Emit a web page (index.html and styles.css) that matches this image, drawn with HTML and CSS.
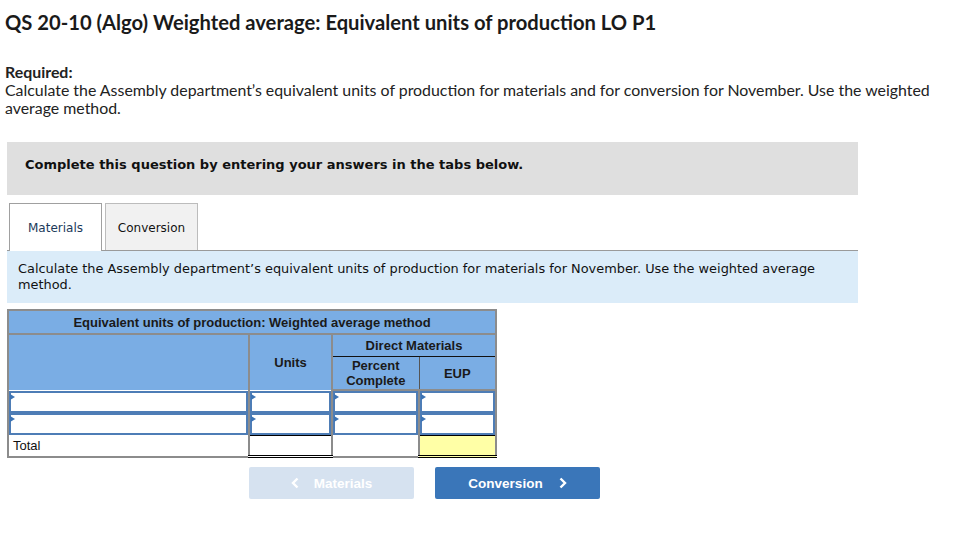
FILE: index.html
```html
<!DOCTYPE html>
<html>
<head>
<meta charset="utf-8">
<link rel="stylesheet" href="styles.css">
</head>
<body>
<div class="page">
  <h1 class="title">QS 20-10 (Algo) Weighted average: Equivalent units of production LO P1</h1>
  <div class="required">
    <div class="req-label">Required:</div>
    <p class="req-text">Calculate the Assembly department’s equivalent units of production for materials and for conversion for November. Use the weighted average method.</p>
  </div>
  <div class="instruct">Complete this question by entering your answers in the tabs below.</div>
  <div class="tabs">
    <div class="tab active">Materials</div>
    <div class="tab">Conversion</div>
  </div>
  <div class="prompt">Calculate the Assembly department’s equivalent units of production for materials for November. Use the weighted average method.</div>
  <table class="eup">
    <colgroup>
      <col class="w1"><col class="w2"><col class="w3"><col class="w4">
    </colgroup>
    <tr class="r-title"><th colspan="4" class="h-title">Equivalent units of production: Weighted average method</th></tr>
    <tr class="r-dm">
      <th rowspan="2" class="c1"></th>
      <th rowspan="2" class="c2 h-units">Units</th>
      <th colspan="2" class="h-dm">Direct Materials</th>
    </tr>
    <tr class="r-pc">
      <th class="c3">Percent<br>Complete</th>
      <th class="c4">EUP</th>
    </tr>
    <tr class="r-in">
      <td class="in"><div class="box"></div></td>
      <td class="in"><div class="box"></div></td>
      <td class="in"><div class="box"></div></td>
      <td class="in"><div class="box"></div></td>
    </tr>
    <tr class="r-in">
      <td class="in"><div class="box"></div></td>
      <td class="in"><div class="box"></div></td>
      <td class="in"><div class="box"></div></td>
      <td class="in"><div class="box"></div></td>
    </tr>
    <tr class="r-total">
      <td class="lbl">Total</td>
      <td class="tot"></td>
      <td class="plain"></td>
      <td class="tot yellow"></td>
    </tr>
  </table>
  <div class="nav">
    <div class="btn disabled">
      <svg class="chev-l" width="8" height="12" viewBox="0 0 8 12"><path d="M6.5 1.5 L2 6 L6.5 10.5" fill="none" stroke="#fff" stroke-width="2.4"/></svg>
      Materials
    </div>
    <div class="btn primary">
      Conversion
      <svg class="chev-r" width="8" height="12" viewBox="0 0 8 12"><path d="M1.5 1.5 L6 6 L1.5 10.5" fill="none" stroke="#fff" stroke-width="2.4"/></svg>
    </div>
  </div>
</div>
</body>
</html>
```
FILE: styles.css
```css
html, body {
  margin: 0;
  padding: 0;
  background: #fff;
}
.page {
  width: 953px;
  height: 537px;
  position: relative;
  color: #222;
}
.title {
  margin: 0;
  padding: 10px 0 0 5px;
  font-family: Lato, "Open Sans", sans-serif;
  font-weight: 700;
  font-size: 20.2px;
  line-height: 25px;
  color: #1a1a1a;
}
.required {
  margin-top: 28px;
  padding-left: 5px;
  padding-right: 18px;
  font-family: Lato, "Open Sans", sans-serif;
  font-size: 15.9px;
  line-height: 18px;
  color: #222;
}
.req-label {
  font-weight: 700;
}
.req-text {
  margin: 0;
}
.instruct {
  margin: 25px 0 0 7px;
  width: 851px;
  height: 53px;
  box-sizing: border-box;
  background: #dfdfdf;
  padding: 14px 0 0 18px;
  font-family: "DejaVu Sans", Verdana, sans-serif;
  font-weight: 700;
  font-size: 13px;
  line-height: 18px;
  color: #111;
}
.tabs {
  display: flex;
  margin: 8px 0 0 7px;
  width: 851px;
  border-bottom: 1px solid #9a9a9a;
  padding-left: 2px;
  box-sizing: border-box;
  gap: 3px;
}
.tab {
  width: 93px;
  height: 47px;
  box-sizing: border-box;
  border: 1px solid #bcbcbc;
  border-bottom: none;
  background: #f1f1f1;
  font-family: "DejaVu Sans", Verdana, sans-serif;
  font-size: 12px;
  display: flex;
  align-items: center;
  justify-content: center;
  padding-top: 1px;
  color: #111;
}
.tab.active {
  background: #fff;
  border-color: #a0a0a0;
  margin-bottom: -1px;
  height: 48px;
  padding-top: 0;
  color: #1c3a5a;
}
.prompt {
  margin-left: 7px;
  width: 851px;
  height: 52px;
  box-sizing: border-box;
  background: #dbecf9;
  padding: 10px 30px 0 11px;
  font-family: "DejaVu Sans", Verdana, sans-serif;
  font-size: 12.9px;
  line-height: 16px;
  color: #111;
}
.eup {
  margin: 6px 0 0 7px;
  border-collapse: collapse;
  border: 2px solid #8c8c8c;
  font-family: "Liberation Sans", Arial, sans-serif;
  font-size: 13px;
  color: #111;
  table-layout: fixed;
  width: 488px;
}
.w1 { width: 241px; }
.w2 { width: 83px; }
.w3 { width: 87px; }
.w4 { width: 77px; }
.eup th {
  background: #7aade4;
  font-weight: 700;
  padding: 0;
  text-align: center;
  line-height: 15px;
  color: #1a1a1a;
}
.eup th.h-title {
  height: 22px;
  font-size: 13px;
  border-bottom: 2px solid #8c8c8c;
}
.eup th.c1 {
  border-right: 2px solid #8c8c8c;
}
.eup th.c2 {
  border-right: 2px solid #8c8c8c;
  vertical-align: middle;
  padding-bottom: 1px;
}
.eup th.h-dm {
  height: 21px;
  border-bottom: 1px solid #111;
}
.eup th.c3 {
  height: 32px;
  border-right: 1px solid #555;
}
.eup th.c4 {
  padding-bottom: 0;
}
.eup tr.r-pc th {
  border-bottom: 2px solid #8c8c8c;
}
.eup td {
  padding: 0;
}
.eup td.in {
  border-right: 2px solid #8c8c8c;
  background: #fff;
}
.eup td.in:last-child {
  border-right: none;
}
.box {
  position: relative;
  height: 18px;
  border: 2px solid #4e7db6;
  background: #fff;
}
.box::before {
  content: "";
  position: absolute;
  left: -1px;
  top: 1px;
  width: 0;
  height: 0;
  border-top: 3px solid transparent;
  border-bottom: 3px solid transparent;
  border-left: 5px solid #3c73b4;
}
.eup tr.r-total td {
  height: 19px;
  border-right: 2px solid #8c8c8c;
}
.eup tr.r-total td:last-child {
  border-right: none;
}
.eup td.lbl {
  padding-left: 4px;
  font-size: 13px;
}
.eup td.tot {
  border-top: 1px solid #000;
  border-bottom: 3px double #000;
}
.eup td.yellow {
  background: #ffffa6;
}
.nav {
  display: flex;
  gap: 21px;
  margin: 9px 0 0 249px;
}
.btn {
  width: 165px;
  height: 32px;
  border-radius: 2px;
  display: flex;
  align-items: center;
  justify-content: center;
  font-family: "Liberation Sans", Arial, sans-serif;
  font-weight: 700;
  font-size: 13.5px;
  color: #fff;
}
.btn.disabled {
  background: #d6e2f0;
}
.btn.primary {
  background: #3a76b9;
}
.chev-l {
  margin-right: 15px;
}
.chev-r {
  margin-left: 16px;
}
```
